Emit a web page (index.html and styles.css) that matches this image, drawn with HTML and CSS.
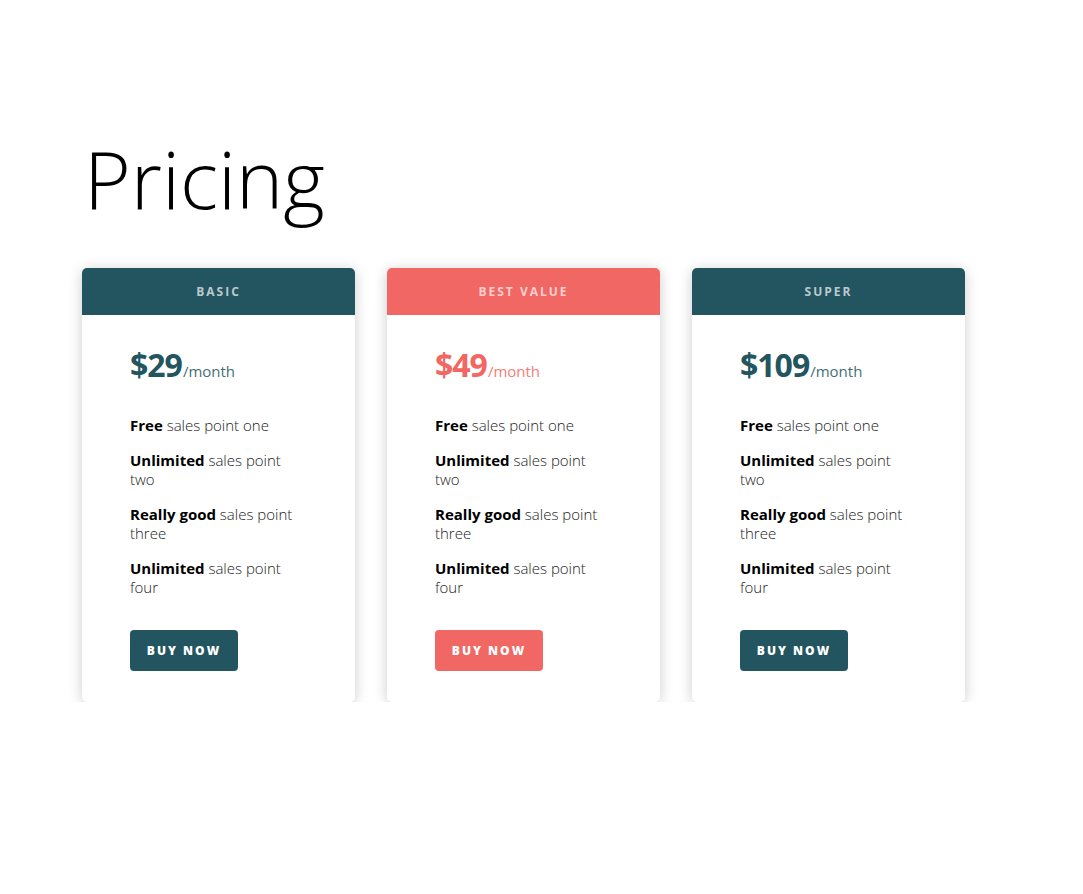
FILE: index.html
```html
<!DOCTYPE html>
<html lang="en">
<head>
<meta charset="utf-8">
<title>Pricing</title>
<link rel="stylesheet" href="styles.css">
</head>
<body>
<main class="page">
  <h1 class="title">Pricing</h1>
  <div class="plans">
    <section class="card">
      <header class="card-head">Basic</header>
      <div class="card-body">
        <p class="price"><span class="amount">$29</span><span class="per">/month</span></p>
        <ul class="features">
          <li><strong>Free</strong> sales point one</li>
          <li><strong>Unlimited</strong> sales point two</li>
          <li><strong>Really good</strong> sales point three</li>
          <li><strong>Unlimited</strong> sales point four</li>
        </ul>
        <a class="btn" href="#">Buy now</a>
      </div>
    </section>
    <section class="card card-accent">
      <header class="card-head">Best value</header>
      <div class="card-body">
        <p class="price"><span class="amount">$49</span><span class="per">/month</span></p>
        <ul class="features">
          <li><strong>Free</strong> sales point one</li>
          <li><strong>Unlimited</strong> sales point two</li>
          <li><strong>Really good</strong> sales point three</li>
          <li><strong>Unlimited</strong> sales point four</li>
        </ul>
        <a class="btn" href="#">Buy now</a>
      </div>
    </section>
    <section class="card">
      <header class="card-head">Super</header>
      <div class="card-body">
        <p class="price"><span class="amount">$109</span><span class="per">/month</span></p>
        <ul class="features">
          <li><strong>Free</strong> sales point one</li>
          <li><strong>Unlimited</strong> sales point two</li>
          <li><strong>Really good</strong> sales point three</li>
          <li><strong>Unlimited</strong> sales point four</li>
        </ul>
        <a class="btn" href="#">Buy now</a>
      </div>
    </section>
  </div>
</main>
</body>
</html>
```
FILE: styles.css
```css
* { box-sizing: border-box; }
html, body { margin: 0; background: #fff; }
body {
  font-family: "Open Sans", "Noto Sans", sans-serif;
  color: #222;
}
.page {
  padding: 128px 82px 0 82px;
}
.title {
  margin: 0 0 40px 2px;
  font-size: 80px;
  font-weight: 300;
  line-height: 100px;
  color: #000;
  letter-spacing: 0;
}
.plans {
  display: flex;
  gap: 32px;
}
.card {
  width: 273px;
  border-radius: 5px;
  background: #fff;
  box-shadow: 0 2px 14px rgba(0,0,0,0.2);
  overflow: hidden;
  --accent: #225560;
}
.card-accent { --accent: #f06763; }
.card-head {
  height: 47px;
  background: var(--accent);
  color: rgba(255,255,255,0.7);
  text-transform: uppercase;
  font-size: 12px;
  font-weight: 700;
  letter-spacing: 2px;
  display: flex;
  align-items: center;
  justify-content: center;
}
.card-body {
  padding: 26px 48px 31px 48px;
}
.price {
  margin: 0;
  line-height: 48px;
  color: var(--accent);
}
.amount {
  font-size: 32px;
  font-weight: 700;
  letter-spacing: -1px;
}
.per {
  font-size: 15px;
  font-weight: 400;
  margin-left: 1px;
  opacity: 0.85;
}
.features {
  list-style: none;
  margin: 21px 0 0 0;
  padding: 0;
}
.features li {
  font-size: 15px;
  line-height: 19px;
  font-weight: 300;
  color: #222;
  margin-bottom: 16px;
}
.features strong { font-weight: 700; color: #000; }
.btn {
  display: inline-flex;
  align-items: center;
  justify-content: center;
  margin-top: 17px;
  width: 108px;
  height: 41px;
  border-radius: 4px;
  background: var(--accent);
  color: #fff;
  text-decoration: none;
  text-transform: uppercase;
  font-size: 12px;
  font-weight: 800;
  letter-spacing: 2px;
}
```
